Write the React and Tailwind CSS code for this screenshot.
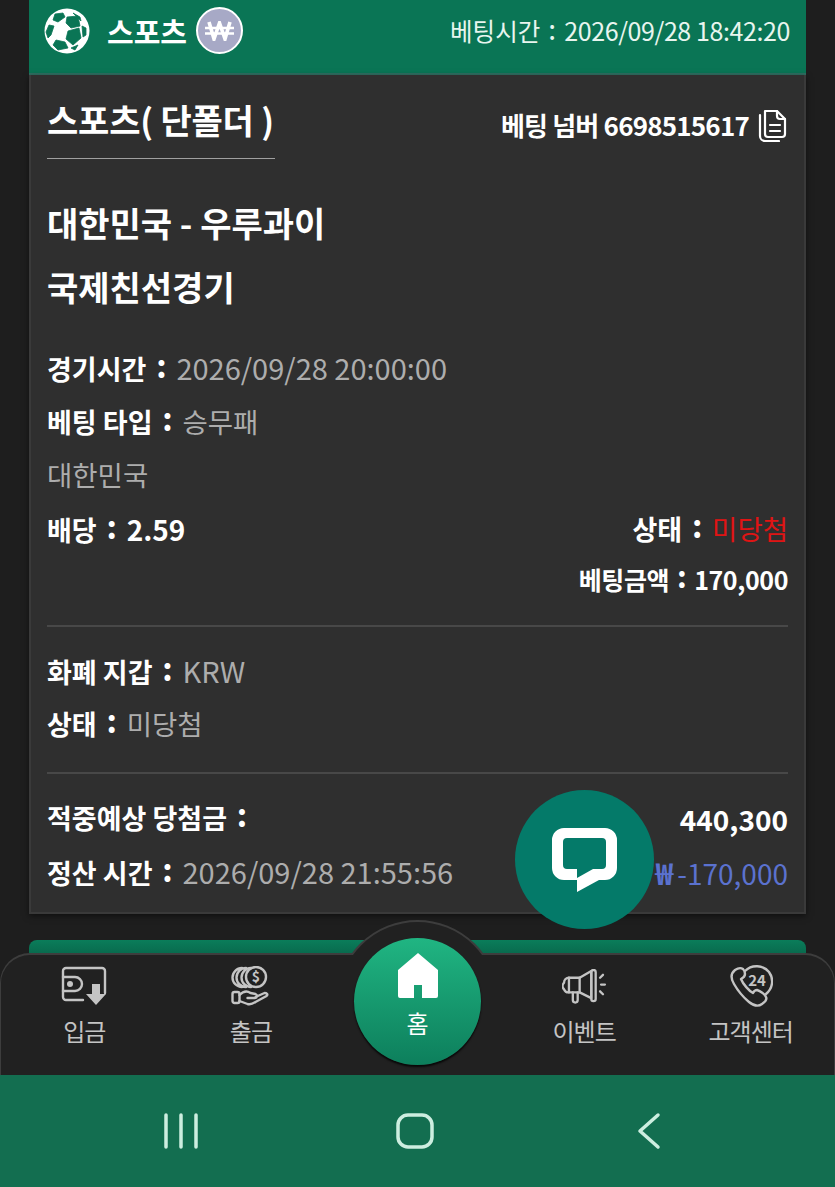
const F = '"Noto Sans CJK KR","Noto Sans",sans-serif';

function Ball() {
  return (
    <svg width="46" height="46" viewBox="-23 -23 46 46">
      <circle cx="0" cy="0" r="22.500" fill="#fff" />
      <g fill="#0a7555" stroke="#0a7555" strokeWidth="0.800" strokeLinejoin="round">
        <path d="M0-14l11-1 2 10-9 2-5-5z" />
        <path d="M1 0l11-3 2 10-8 7-7-6z" />
        <path d="M-11 9l9 2 3 6-10 2-5-5z" />
        <path d="M-18-6l5 1-3 9-3 3-2-6z" />
        <path d="M-12-17l8-1 2 4-7 5-5-2z" />
        <path d="M15-5l4 2v7l-3 2z" />
        <path d="M6-18l7 4 1 4z" />
        <path d="M4 17l7-3-3 5z" />
      </g>
    </svg>
  );
}

function Won() {
  return (
    <div className="w-[47px] h-[47px] rounded-full bg-[#a7a9c6] border-2 border-white flex items-center justify-center">
      <svg width="29" height="20" viewBox="0 0 29 20" fill="none" stroke="#fff" strokeWidth="3.600" strokeLinejoin="miter">
        <path d="M4 1l5 17 5.500-16 5.500 16 5-17" />
        <path d="M0 7h29M0 12.500h29" strokeWidth="2.600" />
      </svg>
    </div>
  );
}

function Copy() {
  return (
    <svg width="31" height="34" viewBox="0 0 31 34" fill="none" stroke="#fff" strokeWidth="2.200" strokeLinecap="round" strokeLinejoin="round">
      <path d="M8 3h12l8 8v15a3 3 0 0 1-3 3H11a3 3 0 0 1-3-3V3z" />
      <path d="M20 3v5a3 3 0 0 0 3 3h5" />
      <path d="M3 7v21a5 5 0 0 0 5 5h14" />
      <path d="M13 17h10M13 23h10" />
    </svg>
  );
}

function Row({ children, className = "" }) {
  return <div className={"flex items-center justify-between " + className}>{children}</div>;
}

function Colon() {
  return <span className="inline-block w-[30px] text-center font-bold text-[32px] leading-none -translate-y-[2px]">:</span>;
}

function Label({ children }) {
  return (
    <span className="text-white font-bold text-[27px]">
      {children}
      <Colon />
    </span>
  );
}

function NavItem({ icon, label }) {
  return (
    <div className="flex flex-col items-center">
      <div className="h-[44px] flex items-center justify-center">{icon}</div>
      <div className="mt-[7px] text-[24px] leading-[32px] text-[#c4c4c4] tracking-[-1px]">{label}</div>
    </div>
  );
}

const s = { fill: "none", stroke: "#c4c4c4", strokeWidth: 2.4, strokeLinecap: "round", strokeLinejoin: "round" };

function Wallet() {
  return (
    <svg width="46" height="40" viewBox="0 0 46 40">
      <g {...s}>
        <path d="M22 34H5a3 3 0 0 1-3-3V5a3 3 0 0 1 3-3h36a3 3 0 0 1 3 3v22" />
        <path d="M2 11h12a7 7 0 0 1 7 7 7 7 0 0 1-7 7H2" />
      </g>
      <circle cx="9" cy="18" r="3" fill="#c4c4c4" />
      <path d="M31 18h8v10h6L35 39 25 28h6z" fill="#c4c4c4" />
    </svg>
  );
}
function Coins() {
  return (
    <svg width="39" height="40" viewBox="0 0 39 40">
      <g {...s}>
        <path d="M11 2a9.500 9.500 0 0 0 0 19M15 2a9.500 9.500 0 0 0 0 19M20 2a9.500 9.500 0 0 0 0 19" />
        <circle cx="25" cy="11" r="10" />
        <rect x="1.500" y="26" width="7" height="11" rx="2" />
        <path d="M8.500 29c4-4 8-4 11-2l5 1c2 1 2 4-1 4h-7M8.500 35l8 3c3 1 5 0 8-2l11-6c2-2 0-3-2-3l-9 4" />
      </g>
      <text x="25" y="16" textAnchor="middle" fontSize="14" fontWeight="700" fill="#c4c4c4" style={{ fontFamily: F }}>$</text>
    </svg>
  );
}
function Megaphone() {
  return (
    <svg width="45" height="35" viewBox="0 0 46 36">
      <g {...s}>
        <path d="M7 9h11l12-7v28l-12-6H7a5 5 0 0 1-5-3 5 5 0 0 1 0-7 5 5 0 0 1 5-5z" />
        <path d="M7 9v15M18 9v15" />
        <path d="M11 24v8a2.500 2.500 0 0 0 5 0v-8" />
        <rect x="30" y="1" width="4.500" height="32" rx="2.200" />
        <path d="M39 9l3-3M40 16h4M39 23l3 3" />
      </g>
    </svg>
  );
}
function Phone24() {
  return (
    <svg width="44" height="44" viewBox="0 0 44 44">
      <g {...s}>
        <path d="M14 5c-3-2-5-1-8 1-5 4-4 9-1 14 4 7 9 13 15 18 5 4 9 5 13 2 3-2 5-5 4-7-1-3-6-6-9-7-2 0-3 1-4 3-4-2-10-9-12-14 2-1 4-3 4-5 0-2-1-4-2-5z" />
        <path d="M16 7c7-7 18-6 24 1 5 7 4 16-3 22" />
      </g>
      <text x="28" y="22" textAnchor="middle" fontSize="15" fontWeight="700" fill="#c4c4c4" style={{ fontFamily: F }}>24</text>
    </svg>
  );
}

export default function App() {
  return (
    <div className="relative w-[835px] h-[1187px] overflow-hidden bg-[#1e1e1e] flex flex-col" style={{ fontFamily: F }}>
      <div className="mx-[29px] flex flex-col">
        <div className="h-[75px] pb-[12px] bg-[#0a7555] border-b-2 border-[#2f6f62] flex items-center justify-between pl-[15px] pr-[16px]">
          <div className="flex items-center">
            <Ball />
            <span className="ml-[17px] mr-[9px] text-white font-bold text-[29px] leading-[34px]">스포츠</span>
            <Won />
          </div>
          <div className="text-[#e8f5ef] text-[24.5px] whitespace-nowrap">
            베팅시간
            <span className="inline-block w-[24px] text-center text-[28px] leading-none -translate-y-[1px]">:</span>
            <span className="text-[25px] tracking-[-0.4px]">2026/09/28 18:42:20</span>
          </div>
        </div>

        <div className="h-[839px] bg-[#2f2f2f] border-x-2 border-b-2 border-[#3a3a3a] pl-[16px] pr-[16px] flex flex-col shadow-[0_2px_6px_rgba(0,0,0,0.5)]">
          <Row className="mt-[20px] items-start">
            <div className="w-[228px] h-[64px] border-b border-[#a0a0a0] text-white font-bold text-[34px] leading-[50px] whitespace-nowrap tracking-[-0.2px]">
              스포츠( 단폴더 )
            </div>
            <div className="flex items-center gap-[8px] mt-[10px] text-white font-bold text-[26px] leading-[40px] tracking-[-0.8px]">
              베팅 넘버 6698515617 <Copy />
            </div>
          </Row>

          <div className="mt-[32px] h-[64px] leading-[64px] text-white font-bold text-[34px]">대한민국 - 우루과이</div>
          <div className="h-[64px] leading-[64px] text-white font-bold text-[34px]">국제친선경기</div>

          <div className="mt-[22px] h-[54px] leading-[53px] text-[29px] text-[#adadad] whitespace-nowrap"><Label>경기시간</Label>2026/09/28 20:00:00</div>
          <div className="h-[53px] leading-[53px] text-[27.500px] text-[#adadad]"><Label>베팅 타입</Label>승무패</div>
          <div className="h-[54px] leading-[53px] text-[27.500px] text-[#adadad]">대한민국</div>
          <Row className="h-[54px] text-[27.500px]">
            <span className="text-white font-bold text-[28px]"><Label>배당</Label>2.59</span>
            <span><Label>상태</Label><span className="text-[#e01414]">미당첨</span></span>
          </Row>
          <Row className="h-[48px] justify-end text-white font-bold text-[25px] tracking-[-0.4px]">
            <span>베팅금액<span className="inline-block w-[25px] text-center text-[30px] leading-none -translate-y-[2px]">:</span>170,000</span>
          </Row>

          <div className="mt-[21px] border-t-2 border-[#484848]" />
          <div className="mt-[17px] h-[53px] leading-[53px] text-[29px] text-[#adadad]"><Label>화폐 지갑</Label>KRW</div>
          <div className="h-[53px] leading-[53px] text-[27.500px] text-[#adadad]"><Label>상태</Label>미당첨</div>

          <div className="mt-[22px] border-t-2 border-[#484848]" />
          <Row className="mt-[18px] h-[53px] text-white font-bold">
            <Label>적중예상 당첨금</Label><span className="text-[28px]">440,300</span>
          </Row>
          <Row className="h-[54px] text-[28px]">
            <span className="text-[#adadad] text-[29px]"><Label>정산 시간</Label>2026/09/28 21:55:56</span>
            <span className="text-[#5b72cf]"><b className="text-[30px] mr-[4px]">₩</b>-170,000</span>
          </Row>
        </div>

        <div className="mt-[26px] h-[13px] rounded-t-[8px] bg-gradient-to-b from-[#0a7d5a] to-[#096b4e]" />
      </div>

      <div className="relative flex-1 rounded-t-[30px] bg-[#212121] border-t-2 border-x border-[#3d3d3d] grid grid-cols-5 items-start pt-[9px]">
        <NavItem icon={<Wallet />} label="입금" />
        <NavItem icon={<Coins />} label="출금" />
        <div />
        <NavItem icon={<Megaphone />} label="이벤트" />
        <NavItem icon={<Phone24 />} label="고객센터" />
      </div>

      <div className="h-[112px] bg-[#136e50] flex items-center pl-[163px]">
        <svg width="36" height="38" viewBox="0 0 36 38" stroke="#cdeee0" strokeWidth="3.500" strokeLinecap="round"><path d="M3 3v32M18 3v32M33 3v32" /></svg>
        <svg className="ml-[197px]" width="38" height="38" viewBox="0 0 38 38" fill="none" stroke="#cdeee0" strokeWidth="3.500"><rect x="2" y="3" width="34" height="32" rx="10" /></svg>
        <svg className="ml-[203px]" width="24" height="38" viewBox="0 0 24 38" fill="none" stroke="#cdeee0" strokeWidth="3.500" strokeLinecap="round" strokeLinejoin="round"><path d="M21 3L3 19l18 16" /></svg>
      </div>

      {/* home button */}
      <div className="absolute left-[336px] top-[920px] w-[163px] h-[35px] overflow-hidden">
        <div className="w-[163px] h-[163px] rounded-full bg-[#212121] border-2 border-[#3d3d3d]" />
      </div>
      <div className="absolute left-[354px] top-[938px] w-[127px] h-[127px] rounded-full bg-gradient-to-b from-[#20b582] to-[#0d7f5c] shadow-[0_2px_2px_rgba(0,0,0,0.8)] flex flex-col items-center pt-[15px]">
        <svg width="40" height="45" viewBox="0 0 40 45" fill="#fff"><path d="M20 0L40 17v26a2 2 0 0 1-2 2H24V32h-8v13H2a2 2 0 0 1-2-2V17z" /></svg>
        <span className="mt-[9px] text-white text-[24px] leading-[32px]">홈</span>
      </div>

      {/* chat */}
      <div className="absolute left-[515px] top-[790px] w-[139px] h-[139px] rounded-full bg-[#047a69] flex items-center justify-center">
        <svg width="65" height="64" viewBox="0 0 65 64">
          <path fill="#fff" fillRule="evenodd" d="M12 0H53a12 12 0 0 1 12 12V40a12 12 0 0 1-12 12H47L25 64V52H12A12 12 0 0 1 0 40V12A12 12 0 0 1 12 0zM15 10a4 4 0 0 0-4 4V37a4 4 0 0 0 4 4H25V50L41 41H50a4 4 0 0 0 4-4V14a4 4 0 0 0-4-4z" />
        </svg>
      </div>
    </div>
  );
}
